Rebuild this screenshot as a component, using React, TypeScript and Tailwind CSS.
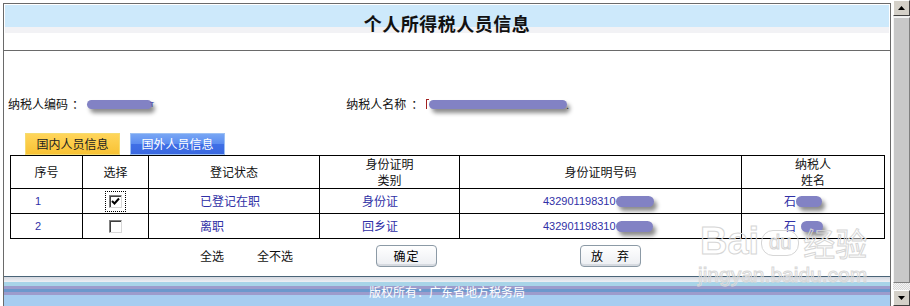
import React from 'react';

const cjk = "font-['Noto_Sans_CJK_SC','Liberation_Sans',sans-serif]";

const Blob = ({ w, h = 10 }: { w: number; h?: number }) => (
  <span
    className="inline-block rounded-full bg-[#8282c4] shadow-[3px_4px_4px_rgba(0,0,0,0.45)]"
    style={{ width: w, height: h }}
  />
);

const CheckBox = ({ checked }: { checked?: boolean }) => (
  <span className={checked ? 'inline-flex p-[3px] outline outline-1 outline-dotted outline-black' : 'inline-flex p-[3px]'}>
    <span className="w-[13px] h-[13px] border border-t-[#808080] border-l-[#808080] border-b-[#d8d8d8] border-r-[#d8d8d8] bg-white flex items-center justify-center shadow-[inset_1px_1px_0_#404040]">
      {checked && (
        <svg width="9" height="9" viewBox="0 0 9 9">
          <path d="M1 4 L3.5 6.5 L8 1.5" stroke="#000" strokeWidth="2" fill="none" />
        </svg>
      )}
    </span>
  </span>
);

const Btn = ({ label }: { label: string }) => (
  <button className="w-[61px] h-[22px] rounded-[4px] border border-[#8c9aa6] bg-[linear-gradient(to_bottom,#ffffff,#eceef2)] shadow-[inset_0_-2px_0_#d6dae0] text-[12px] text-black tracking-[1px] whitespace-pre">
    {label}
  </button>
);

const cols = 'grid grid-cols-[72px_66px_171px_140px_282px_143px]';
const cell = 'border-r border-b border-black flex items-center';
const head = 'border-r border-b border-black flex flex-col items-center justify-center';

const rows = [
  { no: '1', checked: true, status: '已登记在职', kind: '身份证', id: '432901198310', idBlob: 38, name: 26, nameGap: 0 },
  { no: '2', checked: false, status: '离职', kind: '回乡证', id: '432901198310', idBlob: 37, name: 22, nameGap: 5 },
];

const ScrollBar = () => (
  <div className="w-[17px] h-full flex flex-col bg-[#eeeeee]">
    <div className="h-[16px] bg-[#d4d0c8] border border-t-white border-l-white border-b-[#404040] border-r-[#404040] flex items-center justify-center">
      <svg width="7" height="4" viewBox="0 0 7 4"><path d="M0 4 L3.5 0 L7 4 Z" fill="#000" /></svg>
    </div>
    <div className="flex-1 mt-[1px] bg-[#c8c8c8] border border-t-[#f4f4f4] border-l-[#f4f4f4] border-b-[#808080] border-r-[#808080]" />
    <div className="h-[7px] bg-[repeating-conic-gradient(#d8d8d8_0_25%,#f4f4f4_0_50%)] bg-[length:2px_2px]" />
    <div className="h-[16px] bg-[#d4d0c8] border border-t-white border-l-white border-b-[#404040] border-r-[#404040] flex items-center justify-center">
      <svg width="7" height="4" viewBox="0 0 7 4"><path d="M0 0 L3.5 4 L7 0 Z" fill="#000" /></svg>
    </div>
  </div>
);

export default function App() {
  return (
    <div className={`w-[910px] h-[306px] bg-white flex overflow-hidden relative ${cjk}`}>
      <div className="w-[893px] h-full pl-[3px] pt-[3px]">
        <div className="w-[888px] h-full border-l border-t border-r border-[#6a6a6a] flex flex-col">
          {/* title */}
          <div className="pt-[1px] px-[1px] border-b border-[#6a6a6a]">
            <div className="h-[45px] pt-[8px] bg-[linear-gradient(to_bottom,#cde9fb_0px,#cde9fb_22px,#f2f2f5_22px,#f2f2f5_28px,#ffffff_28px)] text-center text-[18px] leading-[20px] font-bold tracking-[0.5px] text-[#111]">
              个人所得税人员信息
            </div>
          </div>

          {/* taxpayer */}
          <div className="mt-[45px] h-[16px] flex items-center text-[12px] text-[#111]">
            <span className="ml-[4px] w-[79px] flex">
              <span>纳税人编码</span>
              <span className="ml-[4px]">：</span>
            </span>
            <Blob w={65} h={9} />
            <span className="text-[8px] text-[#3030a0] ml-[-2px]">т</span>
            <span className="ml-[192px] w-[80px] flex">
              <span>纳税人名称</span>
              <span className="ml-[5px]">：</span>
            </span>
            <span className="w-[3px] h-[10px] border-l border-t border-[#a02020]" />
            <Blob w={138} h={9} />
            <span className="text-[#333] text-[10px] ml-[-1px] self-end">.</span>
          </div>

          {/* tabs */}
          <div className="mt-[21px] ml-[21px] flex gap-[10px] h-[22px] text-[12px]">
            <div className="w-[95px] h-[22px] border border-[#f5dc70] bg-[linear-gradient(to_bottom,#ffd55a,#f8c234)] flex items-center justify-center text-[#222]">
              国内人员信息
            </div>
            <div className="w-[95px] h-[22px] border border-[#9cc0f4] bg-[linear-gradient(to_bottom,#78a6f4,#5b8cf0_50%,#3f6fe6_52%,#3a68e0)] flex items-center justify-center text-white">
              国外人员信息
            </div>
          </div>

          {/* table */}
          <div className="ml-[6px] w-[875px] border-l border-t border-black text-[12px]">
            <div className={`${cols} h-[33px] text-[#111] text-center leading-[16px]`}>
              <div className={head}>序号</div>
              <div className={head}>选择</div>
              <div className={head}>登记状态</div>
              <div className={head}>
                <span>身份证明</span>
                <span>类别</span>
              </div>
              <div className={head}>身份证明号码</div>
              <div className={head}>
                <span>纳税人</span>
                <span>姓名</span>
              </div>
            </div>
            {rows.map((r) => (
              <div key={r.no} className={`${cols} h-[25px] text-[#3030a6]`}>
                <div className={`${cell} pl-[24px] font-['Liberation_Sans',sans-serif] text-[11px]`}>{r.no}</div>
                <div className={`${cell} justify-center`}><CheckBox checked={r.checked} /></div>
                <div className={`${cell} pl-[51px]`}>{r.status}</div>
                <div className={`${cell} pl-[42px]`}>{r.kind}</div>
                <div className={`${cell} pl-[83px]`}>
                  <span className="font-['Liberation_Sans',sans-serif] text-[11px]">{r.id}</span>
                  <Blob w={r.idBlob} h={11} />
                </div>
                <div className={`${cell} pl-[42px]`}>
                  <span>石</span>
                  <span className="flex" style={{ marginLeft: r.nameGap }}><Blob w={r.name} h={11} /></span>
                </div>
              </div>
            ))}
          </div>

          {/* actions */}
          <div className="mt-[6px] h-[22px] flex items-center text-[12px] text-[#111]">
            <span className="ml-[196px]">全选</span>
            <span className="ml-[33px]">全不选</span>
            <span className="ml-[83px] flex"><Btn label="确定" /></span>
            <span className="ml-[143px] flex"><Btn label="放　弃" /></span>
          </div>

          {/* footer */}
          <div className="mt-auto h-[30px] border-t border-[#4a6478] bg-[linear-gradient(to_bottom,#d4d8e0_0px,#eef0f4_5px,#a8d4e8_5px,#a8d4e8_9px,#9c9ccc_9px,#9c9ccc_12px,#6c98cc_12px,#6c98cc_15px,#9c9ccc_15px,#9c9ccc_18px,#a6cdf0_18px,#a6cdf0_100%)] flex items-center justify-center text-white text-[12px]">
            版权所有：广东省地方税务局
          </div>
        </div>
      </div>
      <ScrollBar />

      {/* watermark */}
      <div className="absolute left-[700px] top-[222px] pointer-events-none flex items-end text-transparent [-webkit-text-stroke:1px_#d6d6d6] font-['Liberation_Sans',sans-serif]">
        <span className="text-[38px] leading-[38px] font-bold">Bai</span>
        <span className="ml-[2px] mb-[4px] w-[38px] h-[26px] rounded-[12px] border border-[#d6d6d6] text-[20px] leading-[22px] text-center">du</span>
        <span className={`ml-[4px] text-[32px] leading-[36px] ${cjk}`}>经验</span>
      </div>
      <div className="absolute left-[698px] top-[264px] pointer-events-none text-transparent [-webkit-text-stroke:1px_#d8d8d8] text-[21px] leading-[22px] font-['Liberation_Sans',sans-serif]">
        jingyan.baidu.com
      </div>
    </div>
  );
}
